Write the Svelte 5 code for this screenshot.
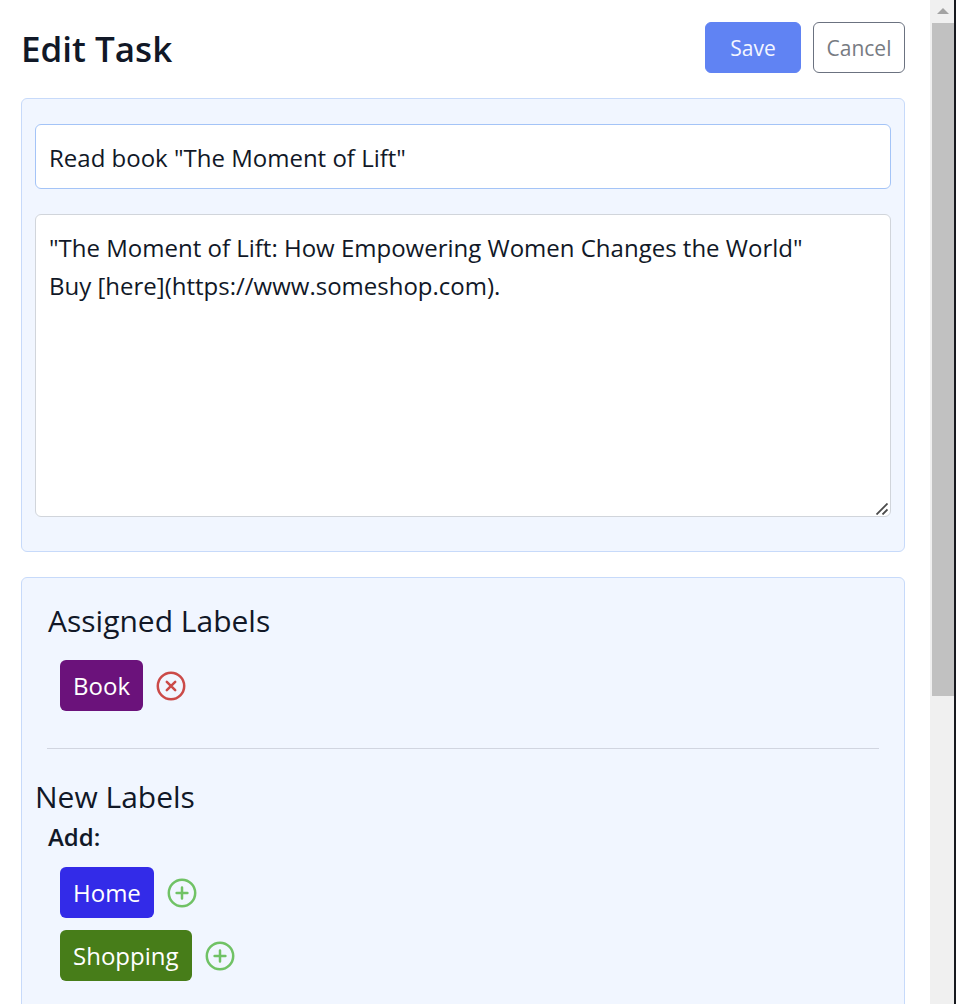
<script>
  let title = $state('Read book "The Moment of Lift"');
  let details = $state(
    '"The Moment of Lift: How Empowering Women Changes the World"\nBuy [here](https://www.someshop.com).'
  );
  let assigned = $state([{ name: 'Book', color: '#6b127b' }]);
  let available = $state([
    { name: 'Home', color: '#332be8' },
    { name: 'Shopping', color: '#477d19' }
  ]);

  function remove(label) {
    assigned = assigned.filter((l) => l.name !== label.name);
    available = [...available, label];
  }

  function add(label) {
    available = available.filter((l) => l.name !== label.name);
    assigned = [...assigned, label];
  }
</script>

<div class="window">
  <main>
    <header>
      <h1>Edit Task</h1>
      <div class="actions">
        <button class="btn save" type="button">Save</button>
        <button class="btn cancel" type="button">Cancel</button>
      </div>
    </header>

    <section class="panel fields">
      <input type="text" aria-label="Title" bind:value={title} />
      <div class="area">
        <textarea aria-label="Description" bind:value={details}></textarea>
        <svg class="grip" width="12" height="12" viewBox="0 0 12 12" aria-hidden="true">
          <path d="M0.5 11.5L11.5 0.5M6.5 11.5L11.5 6.5" />
        </svg>
      </div>
    </section>

    <section class="panel labels">
      <div class="assigned">
        <h2>Assigned Labels</h2>
        <ul>
          {#each assigned as label (label.name)}
            <li>
              <span class="tag" style="background: {label.color}">{label.name}</span>
              <button class="icon remove" type="button" aria-label="Remove {label.name}" onclick={() => remove(label)}>
                <svg width="30" height="30" viewBox="0 0 30 30" aria-hidden="true">
                  <circle cx="15" cy="15" r="13.2" />
                  <path d="M10.8 10.8L19.2 19.2M19.2 10.8L10.8 19.2" />
                </svg>
              </button>
            </li>
          {/each}
        </ul>
      </div>
      <hr />
      <h2>New Labels</h2>
      <div class="new">
        <h3>Add:</h3>
        <ul>
          {#each available as label (label.name)}
            <li>
              <span class="tag" style="background: {label.color}">{label.name}</span>
              <button class="icon add" type="button" aria-label="Add {label.name}" onclick={() => add(label)}>
                <svg width="30" height="30" viewBox="0 0 30 30" aria-hidden="true">
                  <circle cx="15" cy="15" r="13.2" />
                  <path d="M15 9.6V20.4M9.6 15H20.4" />
                </svg>
              </button>
            </li>
          {/each}
        </ul>
      </div>
    </section>
  </main>

  <div class="scrollbar" aria-hidden="true">
    <svg class="arrow" width="22" height="23" viewBox="0 0 22 23">
      <path d="M5 14L11 8L17 14Z" />
    </svg>
    <div class="thumb"></div>
  </div>
</div>

<style>
  .window {
    display: flex;
    height: 100vh;
    overflow: hidden;
    box-sizing: border-box;
    border-right: 2px solid #17191f;
    background: #fff;
    color: #111827;
    font-family: 'Segoe UI', 'Open Sans', 'Noto Sans', sans-serif;
    font-size: 24px;
    line-height: 38px;
  }

  .window *,
  .window *::before {
    box-sizing: border-box;
  }

  main {
    flex: 1;
    min-width: 0;
    display: flex;
    flex-direction: column;
    gap: 25px;
    padding: 22px 25px 0 21px;
  }

  header {
    display: flex;
    align-items: center;
    justify-content: space-between;
  }

  h1,
  h2,
  h3 {
    margin: 0;
  }

  h1 {
    padding-top: 3px;
    font-size: 35px;
    font-weight: 600;
    line-height: 48px;
  }

  h2 {
    font-size: 30px;
    font-weight: 400;
    line-height: 44px;
  }

  h3 {
    font-size: 24px;
    font-weight: 600;
    line-height: 36px;
  }

  .actions {
    display: flex;
    gap: 12px;
  }

  .btn {
    height: 51px;
    padding: 0 12px;
    border: 1px solid #6b7280;
    border-radius: 6px;
    font: inherit;
    font-size: 21px;
    cursor: pointer;
  }

  .save {
    min-width: 96px;
    border-color: #6083f3;
    background: #6083f3;
    color: #f3f6ff;
  }

  .cancel {
    min-width: 92px;
    background: #fff;
    color: #777b82;
  }

  .panel {
    border: 1px solid #c7dafa;
    border-radius: 6px;
    background: #f1f6ff;
  }

  .fields {
    display: flex;
    flex-direction: column;
    gap: 25px;
    padding: 25px 13px 34px;
  }

  input,
  textarea {
    display: block;
    width: 100%;
    margin: 0;
    border: 1px solid #a4c4f7;
    border-radius: 6px;
    background: #fff;
    color: #111827;
    font: inherit;
    outline: none;
  }

  input {
    height: 65px;
    padding: 14px 13px 12px;
  }

  .area {
    position: relative;
  }

  textarea {
    height: 303px;
    padding: 14px 13px;
    border-color: #d1d5db;
    resize: none;
  }

  .grip {
    position: absolute;
    right: 3px;
    bottom: 2px;
    fill: none;
    stroke: #4b4b4b;
    stroke-width: 1.8;
  }

  .labels {
    flex: 1 0 auto;
    padding: 21px 13px;
  }

  .assigned,
  .new {
    padding: 0 13px;
  }

  ul {
    display: flex;
    flex-direction: column;
    gap: 12px;
    margin: 0;
    padding: 12px;
    list-style: none;
  }

  .assigned ul {
    padding-top: 17px;
  }

  li {
    display: flex;
    align-items: center;
    gap: 13px;
  }

  .tag {
    padding: 7px 13px 6px;
    border-radius: 6px;
    color: #fff;
  }

  .icon {
    display: flex;
    padding: 0;
    border: 0;
    background: none;
    cursor: pointer;
  }

  .icon svg {
    fill: none;
    stroke: currentColor;
    stroke-width: 2.5;
    stroke-linecap: round;
  }

  .remove {
    color: #cb4a48;
  }

  .add {
    color: #70c265;
  }

  hr {
    height: 1px;
    margin: 25px 12px 26px;
    border: 0;
    background: #d1d5e0;
  }

  .scrollbar {
    flex: none;
    display: flex;
    flex-direction: column;
    width: 24px;
    padding-left: 2px;
    background: #f0f0f0;
  }

  .arrow {
    flex: none;
    fill: #a3a3a3;
  }

  .thumb {
    height: 67vh;
    background: #c1c1c1;
  }
</style>
